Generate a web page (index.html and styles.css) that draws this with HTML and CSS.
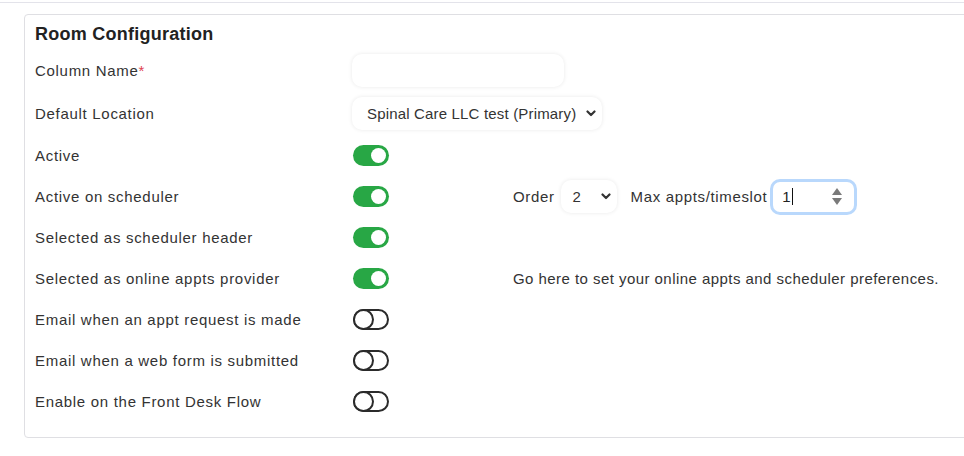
FILE: index.html
```html
<!DOCTYPE html>
<html lang="en">
<head>
<meta charset="utf-8">
<title>Room Configuration</title>
<link rel="stylesheet" href="styles.css">
</head>
<body>
<div class="top-rule"></div>
<section class="card">
  <h2 class="card-title">Room Configuration</h2>
  <div class="rows">
    <div class="row row-tall">
      <label class="label">Column Name<span class="req">*</span></label>
      <div class="control control-wide"><div class="text-input"></div></div>
    </div>
    <div class="row row-tall">
      <label class="label">Default Location</label>
      <div class="control control-wide">
        <div class="select select-loc">
          <span>Spinal Care LLC test (Primary)</span>
          <svg class="chev" width="10" height="7" viewBox="0 0 10 7"><path d="M1.5 1.5 L5 5 L8.5 1.5" fill="none" stroke="#333" stroke-width="2.2" stroke-linecap="round" stroke-linejoin="round"/></svg>
        </div>
      </div>
    </div>
    <div class="row">
      <label class="label">Active</label>
      <div class="control"><span class="toggle on"><span class="knob"></span></span></div>
    </div>
    <div class="row">
      <label class="label">Active on scheduler</label>
      <div class="control"><span class="toggle on"><span class="knob"></span></span></div>
      <div class="extra">
        <span class="extra-label">Order</span>
        <div class="select select-order">
          <span>2</span>
          <svg class="chev" width="10" height="7" viewBox="0 0 10 7"><path d="M1.5 1.5 L5 5 L8.5 1.5" fill="none" stroke="#333" stroke-width="2.2" stroke-linecap="round" stroke-linejoin="round"/></svg>
        </div>
        <span class="extra-label max-label">Max appts/timeslot</span>
        <div class="num-input">
          <span class="num-value">1</span><span class="caret"></span>
          <svg class="spin" width="10" height="20" viewBox="0 0 10 20"><path d="M5 1 L10 8 L0 8 Z" fill="#7a7a7a"/><path d="M0 11 L10 11 L5 18 Z" fill="#7a7a7a"/></svg>
        </div>
      </div>
    </div>
    <div class="row">
      <label class="label">Selected as scheduler header</label>
      <div class="control"><span class="toggle on"><span class="knob"></span></span></div>
    </div>
    <div class="row">
      <label class="label">Selected as online appts provider</label>
      <div class="control"><span class="toggle on"><span class="knob"></span></span></div>
      <div class="extra"><span class="note">Go here to set your online appts and scheduler preferences.</span></div>
    </div>
    <div class="row">
      <label class="label">Email when an appt request is made</label>
      <div class="control"><span class="toggle off"><span class="knob"></span></span></div>
    </div>
    <div class="row">
      <label class="label">Email when a web form is submitted</label>
      <div class="control"><span class="toggle off"><span class="knob"></span></span></div>
    </div>
    <div class="row">
      <label class="label">Enable on the Front Desk Flow</label>
      <div class="control"><span class="toggle off"><span class="knob"></span></span></div>
    </div>
  </div>
</section>
</body>
</html>
```

FILE: styles.css
```css
* { box-sizing: border-box; }
html, body { margin: 0; padding: 0; background: #fff; overflow: hidden; }
body {
  font-family: "Liberation Sans", Arial, sans-serif;
  color: #333;
  width: 964px;
  height: 456px;
}
.top-rule {
  height: 3px;
  border-bottom: 1px solid #e3e3ea;
}
.card {
  margin: 11px 0 0 24px;
  width: 980px;
  border: 1px solid #dfdfe3;
  border-radius: 4px;
  padding: 9px 10px 19px 10px;
}
.card-title {
  margin: 0;
  font-size: 18px;
  letter-spacing: 0.25px;
  font-weight: bold;
  color: #222;
  line-height: 20px;
}
.rows {
  display: flex;
  flex-direction: column;
  gap: 8px;
  margin-top: 9px;
}
.row {
  display: flex;
  align-items: center;
  height: 33px;
}
.row-tall { height: 35px; }
.label {
  width: 318px;
  flex: none;
  font-size: 15px;
  letter-spacing: 0.7px;
  color: #333;
}
.req { color: #e0414f; letter-spacing: 0; }
.control {
  width: 160px;
  flex: none;
  display: flex;
  align-items: center;
}
.control-wide { width: auto; }
.text-input {
  width: 212px;
  height: 33px;
  border-radius: 10px;
  background: #fff;
  box-shadow: 0 0 4px rgba(0,0,0,0.09);
  margin-left: -1px;
  flex: none;
}
.select {
  position: relative;
  display: flex;
  align-items: center;
  height: 33px;
  border-radius: 10px;
  background: #fff;
  box-shadow: 0 0 4px rgba(0,0,0,0.09);
  font-size: 15px;
  color: #333;
  flex: none;
}
.select-loc {
  width: 250px;
  padding-left: 15px;
  margin-left: -1px;
  letter-spacing: 0.17px;
}
.chev { position: absolute; top: 13px; }
.select-loc .chev { right: 6px; }
.select-order {
  width: 56px;
  padding-left: 12px;
  margin-left: 6px;
}
.select-order .chev { right: 6px; }
.toggle {
  position: relative;
  display: inline-block;
  width: 36px;
  height: 21px;
  border-radius: 11px;
}
.toggle.on { background: #28a745; }
.toggle.on .knob {
  position: absolute;
  right: 3px;
  top: 3px;
  width: 15px;
  height: 15px;
  border-radius: 50%;
  background: #fff;
}
.toggle.off { border: 2px solid #2b2b2b; background: #fff; }
.toggle.off .knob {
  position: absolute;
  left: -2px;
  top: -2px;
  width: 21px;
  height: 21px;
  border-radius: 50%;
  border: 2px solid #2b2b2b;
  background: #fff;
}
.extra {
  display: flex;
  align-items: center;
}
.extra-label {
  font-size: 15px;
  letter-spacing: 0.65px;
  color: #333;
}
.max-label { margin-left: 14px; }
.num-input {
  position: relative;
  width: 87px;
  height: 36px;
  margin-left: 3px;
  border: 3px solid #b9d8fc;
  border-radius: 10px;
  background: #fff;
  display: flex;
  align-items: center;
  padding-left: 9px;
  font-size: 15px;
  color: #222;
}
.caret {
  display: inline-block;
  width: 1px;
  height: 17px;
  background: #111;
  margin-left: 1px;
}
.spin {
  position: absolute;
  right: 12px;
  top: 5px;
}
.note {
  font-size: 15px;
  letter-spacing: 0.45px;
  color: #333;
}
```
